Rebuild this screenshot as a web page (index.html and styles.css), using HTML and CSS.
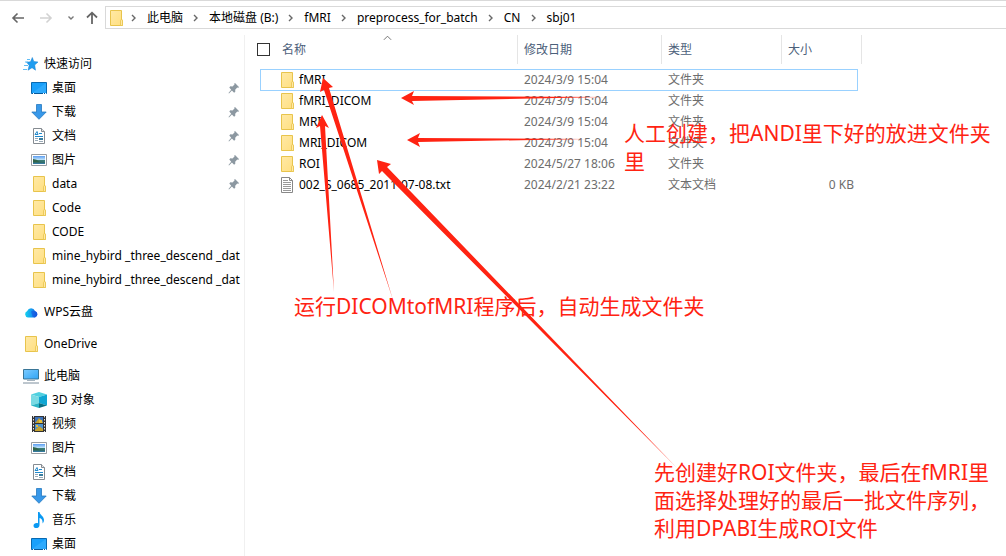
FILE: index.html
```html
<!DOCTYPE html>
<html lang="zh-CN">
<head>
<meta charset="utf-8">
<title>sbj01</title>
<link rel="stylesheet" href="styles.css">
</head>
<body>
<svg class="defs" aria-hidden="true">
  <defs>
    <linearGradient id="g-folder" x1="0" y1="0" x2="1" y2="1"><stop offset="0" stop-color="#ffe9a6"/><stop offset="1" stop-color="#ffdf80"/></linearGradient>
    <linearGradient id="g-screen" x1="0" y1="0" x2="1" y2="1"><stop offset="0" stop-color="#7ccbff"/><stop offset="1" stop-color="#2fa4f5"/></linearGradient>
    <linearGradient id="g-cloud" x1="0" y1="0" x2="1" y2="0"><stop offset="0" stop-color="#12d3ee"/><stop offset=".55" stop-color="#1596f0"/><stop offset="1" stop-color="#1256dd"/></linearGradient>
    <linearGradient id="g-sky" x1="0" y1="0" x2="0" y2="1"><stop offset="0" stop-color="#5b9df2"/><stop offset=".5" stop-color="#c7e8fa"/><stop offset=".55" stop-color="#3d7d72"/><stop offset="1" stop-color="#3479a5"/></linearGradient>
  </defs>
  <symbol id="folder" viewBox="0 0 16 16"><path d="M2.500.5h11v9.500h.9v5.500H2.500z" fill="url(#g-folder)" stroke="#e8c44c"/><path d="M12.500 15.500V10.500q0-.8 1-.8t1 .8v5z" fill="#ffe9a6" stroke="#e8c44c" stroke-width=".8"/></symbol>
  <symbol id="star" viewBox="0 0 16 16"><path d="M9.300 1.500l1.500 4 4.200.5-3.300 3 .8 5.200-3.500-2.500L5 14.200l1.200-5L3.500 6.200l4-.4z" fill="#1f9df0" stroke="#167fce" stroke-width=".5"/><path d="M4 3.500h3M2 6h3M1 9.500h4M0 13.500h4" stroke="#61bdf5" stroke-width="1"/></symbol>
  <symbol id="desktop" viewBox="0 0 16 16"><path d="M.5 2.500h15v11H.5z" fill="#18a0fb" stroke="#0869b1"/><path d="M1 13l14-10v10z" fill="#42b3ff" opacity=".5"/><path d="M1 13.500h14" stroke="#075a9c"/><path d="M2 13.500h1M12 13.500h1M14 13.500h1" stroke="#fff"/></symbol>
  <symbol id="download" viewBox="0 0 16 16"><path d="M5.500.5h5V8h4.700L8 15.300.8 8h4.700z" fill="#3898e9" stroke="#2478bf" stroke-width=".8"/></symbol>
  <symbol id="document" viewBox="0 0 16 16"><path d="M2.500.5h8l3 3v12h-11z" fill="#fff" stroke="#858b91"/><path d="M10.500.5v3h3" fill="#e5e5e5" stroke="#858b91"/><path d="M4 6.500l2-3 1 3M8 5.500h3M4 8.500h8M4 6.500h3" stroke="#2089cc" fill="none"/><path d="M4 10.500h3M4 12.500h3" stroke="#9babb8"/><path d="M8 10h4v2H8z" fill="#397c9d"/><path d="M8 13.500h4" stroke="#9babb8"/></symbol>
  <symbol id="picture" viewBox="0 0 16 16"><path d="M.5 2.500h15v11H.5z" fill="#fff" stroke="#989da2"/><path d="M2 4h12v8H2z" fill="url(#g-sky)"/><path d="M2 7q4 0 6 2.500l6 .5v.5H2z" fill="#31654b"/></symbol>
  <symbol id="cloud" viewBox="0 0 16 16"><path d="M5 13.500A3.400 3.400 0 0 1 4.200 7 4.200 4.200 0 0 1 12 7 3.400 3.400 0 0 1 12 13.500z" fill="url(#g-cloud)"/><path d="M8 7.500a4 4 0 0 1 4-.5 3.400 3.400 0 0 1 0 6.500q-1.500 0-2.500-1z" fill="#174fdc" opacity=".55"/></symbol>
  <symbol id="pc" viewBox="0 0 16 16"><path d="M.5 1.500h15v9.500H.5z" fill="url(#g-screen)" stroke="#397596"/><path d="M7 11.500h2v1H7zM4 12h8v1H4z" fill="#a6b4bf"/><path d="M0 15h16" stroke="#7c8e9d"/></symbol>
  <symbol id="cube" viewBox="0 0 16 16"><path d="M0 2.500L8 0l8 2.500L8 5z" fill="#4fd0df"/><path d="M0 2.500L8 5v6L0 13.500z" fill="#79dae3"/><path d="M8 5l8-2.500v11L8 11z" fill="#10a6d3"/><path d="M8 11v5L0 13.500z" fill="#2bb5c6"/><path d="M8 11l8 2.500L8 16z" fill="#086f83"/></symbol>
  <symbol id="video" viewBox="0 0 16 16"><path d="M1 0h14v16H1z" fill="#343434"/><path d="M4 1h8v6H4z" fill="#3c72bc"/><path d="M4 8h8v7H4z" fill="#4b91d0"/><path d="M5 6l3-4 3 3 1 2H4zM4 14l4-4 4 3v2H4z" fill="#c4a12e"/><path d="M8 4h3v3H8zM5 9h2v2H5z" fill="#e5bf3a"/><path d="M2.500 0v16M13.500 0v16" stroke="#e5e5e5" stroke-dasharray="1.500 1.500"/></symbol>
  <symbol id="music" viewBox="0 0 16 16"><path d="M7 0h1.500c.3 3 4.500 4 4.500 8q0 2-1.500 3.500Q12 7 8.500 6v7c0 4-6 4-6 .800 0-2.300 2.500-3.200 4.500-2.500z" fill="#0a99f2"/></symbol>
  <symbol id="text" viewBox="0 0 16 16"><path d="M2.500.5h8l3 3v12h-11z" fill="#fff" stroke="#888"/><path d="M10.500.5v3h3" fill="none" stroke="#888"/><path d="M4 3.500h5M4 5.500h8M4 7.500h8M4 9.500h8M4 11.500h8M4 13.500h8" stroke="#999"/></symbol>
  <symbol id="pin" viewBox="0 0 12 12"><path d="M7 1l4.200 4.200-1.200.6-.8-.3-2 2.200.1 2-1.200 1-2.200-2.200L1 11.500l-.5-.5L3.200 7.700 1.300 5.500l1-1.200 2.200.1 2-2-.2-.8z" fill="#8c98a1"/></symbol>
  <symbol id="next" viewBox="0 0 6 8"><path d="M1 1l3 3-3 3" fill="none" stroke="#686868" stroke-width="1.400"/></symbol>
</svg>

<header class="bar">
  <div class="tools">
    <button type="button" aria-label="后退"><svg width="14" height="14" viewBox="0 0 14 14"><path d="M13 7H2M6.500 2.500L2 7l4.500 4.500" fill="none" stroke="#666" stroke-width="1.600"/></svg></button>
    <button type="button" aria-label="前进" class="forward"><svg width="14" height="14" viewBox="0 0 14 14"><path d="M1 7h11M7.500 2.500L12 7l-4.500 4.500" fill="none" stroke="#d2d2d2" stroke-width="1.600"/></svg></button>
    <button type="button" aria-label="最近位置"><svg width="8" height="8" viewBox="0 0 8 8"><path d="M1.500 2.500L4 5l2.500-2.500" fill="none" stroke="#777" stroke-width="1.400"/></svg></button>
    <button type="button" aria-label="上移"><svg width="14" height="14" viewBox="0 0 14 14"><path d="M7 13V2M2 6.500L7 1.700l5 4.800" fill="none" stroke="#666" stroke-width="1.800"/></svg></button>
  </div>
  <nav class="path" aria-label="路径">
    <svg class="icon"><use href="#folder"/></svg>
    <svg class="next"><use href="#next"/></svg><a href="#">此电脑</a>
    <svg class="next"><use href="#next"/></svg><a href="#">本地磁盘 (B:)</a>
    <svg class="next"><use href="#next"/></svg><a href="#">fMRI</a>
    <svg class="next"><use href="#next"/></svg><a href="#">preprocess_for_batch</a>
    <svg class="next"><use href="#next"/></svg><a href="#">CN</a>
    <svg class="next"><use href="#next"/></svg><a href="#">sbj01</a>
  </nav>
</header>

<div class="body">
  <nav class="side" aria-label="导航">
    <section>
      <a class="root" href="#"><svg class="icon"><use href="#star"/></svg><span>快速访问</span></a>
      <a href="#"><svg class="icon"><use href="#desktop"/></svg><span>桌面</span><svg class="pin"><use href="#pin"/></svg></a>
      <a href="#"><svg class="icon"><use href="#download"/></svg><span>下载</span><svg class="pin"><use href="#pin"/></svg></a>
      <a href="#"><svg class="icon"><use href="#document"/></svg><span>文档</span><svg class="pin"><use href="#pin"/></svg></a>
      <a href="#"><svg class="icon"><use href="#picture"/></svg><span>图片</span><svg class="pin"><use href="#pin"/></svg></a>
      <a href="#"><svg class="icon"><use href="#folder"/></svg><span>data</span><svg class="pin"><use href="#pin"/></svg></a>
      <a href="#"><svg class="icon"><use href="#folder"/></svg><span>Code</span></a>
      <a href="#"><svg class="icon"><use href="#folder"/></svg><span>CODE</span></a>
      <a href="#"><svg class="icon"><use href="#folder"/></svg><span>mine_hybird _three_descend _dat</span></a>
      <a href="#"><svg class="icon"><use href="#folder"/></svg><span>mine_hybird _three_descend _dat</span></a>
    </section>
    <section><a class="root" href="#"><svg class="icon"><use href="#cloud"/></svg><span>WPS云盘</span></a></section>
    <section><a class="root" href="#"><svg class="icon"><use href="#folder"/></svg><span>OneDrive</span></a></section>
    <section>
      <a class="root" href="#"><svg class="icon"><use href="#pc"/></svg><span>此电脑</span></a>
      <a href="#"><svg class="icon"><use href="#cube"/></svg><span>3D 对象</span></a>
      <a href="#"><svg class="icon"><use href="#video"/></svg><span>视频</span></a>
      <a href="#"><svg class="icon"><use href="#picture"/></svg><span>图片</span></a>
      <a href="#"><svg class="icon"><use href="#document"/></svg><span>文档</span></a>
      <a href="#"><svg class="icon"><use href="#download"/></svg><span>下载</span></a>
      <a href="#"><svg class="icon"><use href="#music"/></svg><span>音乐</span></a>
      <a href="#"><svg class="icon"><use href="#desktop"/></svg><span>桌面</span></a>
    </section>
  </nav>

  <main class="files">
    <table>
      <colgroup><col class="c-name"><col class="c-date"><col class="c-type"><col class="c-size"><col class="c-end"></colgroup>
      <thead>
        <tr>
          <th><div class="head first"><input type="checkbox" aria-label="全选"><button type="button">名称</button><svg class="sort" viewBox="0 0 10 6"><path d="M1 5l4-4 4 4" fill="none" stroke="#666"/></svg></div></th>
          <th><div class="head"><button type="button">修改日期</button></div></th>
          <th><div class="head"><button type="button">类型</button></div></th>
          <th colspan="2"><div class="head"><button type="button">大小</button></div></th>
        </tr>
      </thead>
      <tbody>
        <tr class="focus"><td><div class="name"><svg class="icon"><use href="#folder"/></svg>fMRI</div></td><td>2024/3/9 15:04</td><td>文件夹</td><td></td></tr>
        <tr><td><div class="name"><svg class="icon"><use href="#folder"/></svg>fMRI_DICOM</div></td><td>2024/3/9 15:04</td><td>文件夹</td><td></td></tr>
        <tr><td><div class="name"><svg class="icon"><use href="#folder"/></svg>MRI</div></td><td>2024/3/9 15:04</td><td>文件夹</td><td></td></tr>
        <tr><td><div class="name"><svg class="icon"><use href="#folder"/></svg>MRI_DICOM</div></td><td>2024/3/9 15:04</td><td>文件夹</td><td></td></tr>
        <tr><td><div class="name"><svg class="icon"><use href="#folder"/></svg>ROI</div></td><td>2024/5/27 18:06</td><td>文件夹</td><td></td></tr>
        <tr><td><div class="name"><svg class="icon"><use href="#text"/></svg>002_S_0685_2011-07-08.txt</div></td><td>2024/2/21 23:22</td><td>文本文档</td><td class="size">0 KB</td></tr>
      </tbody>
    </table>
  </main>
</div>

<svg class="arrows" width="1006" height="556" viewBox="0 0 1006 556" aria-hidden="true">
  <path d="M401 98L414 91 412 96 604 97 412 101 414 105z"/>
  <path d="M407 140L420 133 418 138 586 139 418 142 420 147z"/>
  <path d="M322 115L329 128 325 126 334 292 320 126 316 128z"/>
  <path d="M323 78L333 87 329 88 393 300 324 90 320 92z"/>
  <path d="M377 160L391 164 387 167 677 468 382 171 379 174z"/>
</svg>
<p class="note note-create">人工创建，把ANDI里下好的放进文件夹<br>里</p>
<p class="note note-run">运行DICOMtofMRI程序后，自动生成文件夹</p>
<p class="note note-roi">先创建好ROI文件夹，最后在fMRI里<br>面选择处理好的最后一批文件序列，<br>利用DPABI生成ROI文件</p>
</body>
</html>
```
FILE: styles.css
```css
* { box-sizing: border-box; }
body {
  margin: 0;
  min-height: 100vh;
  display: flex;
  flex-direction: column;
  position: relative;
  overflow: hidden;
  background: #fff;
  color: #000;
  font: 12px/20px "Noto Sans", "Noto Sans CJK SC", sans-serif;
}
a { color: inherit; text-decoration: none; }
button { border: 0; padding: 0; background: none; font: inherit; color: inherit; }
svg { flex: none; display: block; }
.defs { position: absolute; width: 0; height: 0; }
.icon { width: 16px; height: 16px; }

.bar { display: flex; border-top: 1px solid #d9d9d9; padding-top: 5px; }
.tools { display: flex; align-items: center; width: 105px; padding-left: 11px; gap: 14px; }
.tools button { display: flex; }
.tools button + button + button { margin-right: -4px; }
.path {
  flex: 1;
  display: flex;
  align-items: center;
  height: 23px;
  padding-left: 2px;
  border: 1px solid #d9d9d9;
  border-right: 0;
  white-space: nowrap;
}
.next { width: 6px; height: 8px; margin: 0 10px; }
.path .icon + .next { margin-left: 7px; }

.body { flex: 1; display: flex; padding-top: 6px; }
.side {
  flex: none;
  display: flex;
  flex-direction: column;
  gap: 8px;
  width: 245px;
  padding-top: 17px;
  border-right: 1px solid #f0f0f0;
  margin-bottom: -1px;
}
.side a { display: flex; align-items: center; gap: 5px; height: 24px; padding: 0 2px 0 31px; }
.side .root { padding-left: 23px; }
.side span { flex: 1; overflow: hidden; white-space: nowrap; }
.side .pin { width: 12px; height: 12px; margin-right: 2px; }

.files { flex: 1; padding-left: 15px; }
table { table-layout: fixed; width: 602px; border-collapse: separate; border-spacing: 0; }
.c-name { width: 258px; }
.c-date { width: 144px; }
.c-type { width: 120px; }
.c-size { width: 76px; }
.c-end { width: 4px; }
th { padding: 0 0 5px; font-weight: 400; color: #4c607a; text-align: left; }
.head { position: relative; display: flex; align-items: center; height: 29px; padding-left: 6px; border-right: 1px solid #e5e5e5; }
.head.first { padding-left: 0; gap: 12px; margin-left: -3px; }
.sort { position: absolute; left: 50%; top: 0; width: 9px; height: 6px; margin-left: -4px; }
input[type=checkbox] { appearance: none; width: 13px; height: 13px; margin: 0; border: 1px solid #333; background: #fff; }
td { height: 21px; padding: 0 6px 2px; line-height: 19px; color: #6d6d6d; white-space: nowrap; border: 0 solid #99d1ff; }
td:first-child { padding: 0 0 2px 19px; color: #000; }
.name { display: flex; align-items: center; gap: 4px; }
.focus td { height: 22px; padding-bottom: 1px; border-width: 1px 0; }
.focus td:first-child { border-left-width: 1px; padding-left: 18px; }
.focus td:last-child { border-right-width: 1px; }
.size { text-align: right; padding-right: 4px; }

.arrows { position: absolute; left: 0; top: 0; fill: #ff2312; }
.note {
  position: absolute;
  margin: 0;
  font-size: 21px;
  line-height: 28px;
  color: #ff2312;
  white-space: nowrap;
}
.note-create { left: 624px; top: 119px; }
.note-run { left: 294px; top: 292px; }
.note-roi { left: 654px; top: 458px; }
```
